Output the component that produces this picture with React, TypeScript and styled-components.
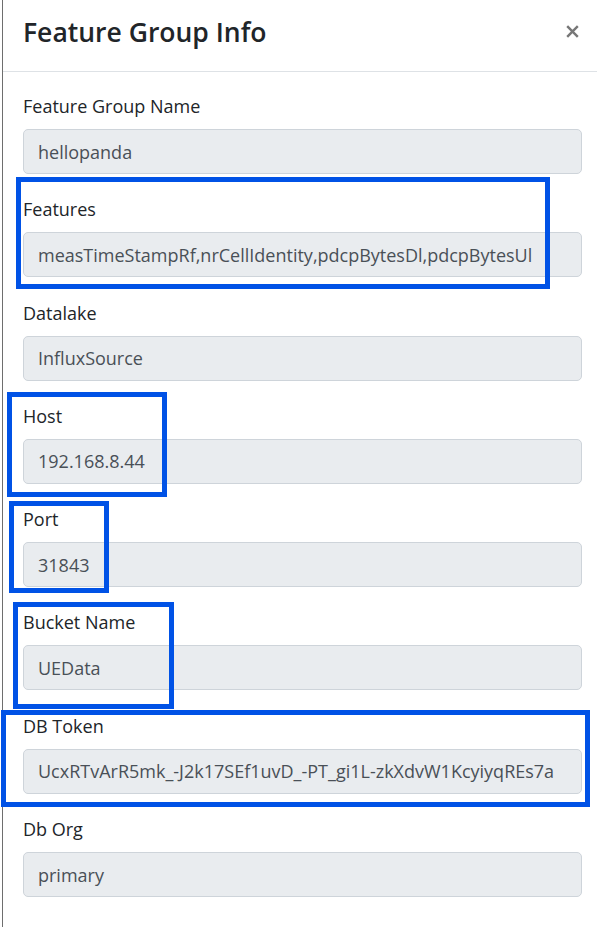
import React from "react";
import styled, { createGlobalStyle } from "styled-components";

const GlobalStyle = createGlobalStyle`
  html, body {
    margin: 0;
    padding: 0;
    background: #ffffff;
    overflow: hidden;
  }
  body {
    font-family: "Open Sans", "Noto Sans", "Liberation Sans", sans-serif;
    color: #212529;
  }
  * { box-sizing: border-box; }
`;

const Page = styled.div`
  position: relative;
  width: 597px;
  height: 927px;
  padding-left: 2px;
  overflow: hidden;
`;

const Modal = styled.div`
  height: 100%;
  border-left: 1px solid #6e6e6e;
  background: #ffffff;
`;

const Header = styled.header`
  display: flex;
  align-items: center;
  justify-content: space-between;
  height: 72px;
  padding: 0 18px 6px 20px;
  border-bottom: 1px solid #dee2e6;
`;

const Title = styled.h4`
  margin: 0;
  font-size: 26.5px;
  font-weight: 600;
  line-height: 1.5;
  color: #212529;
`;

const CloseButton = styled.button`
  display: flex;
  align-items: center;
  justify-content: center;
  padding: 0;
  margin: 0 0 2px 0;
  border: 0;
  background: transparent;
  color: #777777;
  cursor: pointer;
`;

const Body = styled.div`
  padding: 18px 15px 0 20px;
`;

const Group = styled.div`
  margin-bottom: 19.3px;
`;

const Label = styled.label`
  display: block;
  font-size: 18px;
  line-height: 29px;
  padding-top: 2px;
  margin-bottom: 8px;
  color: #212529;
`;

const Field = styled.input`
  display: block;
  width: 100%;
  height: 45px;
  padding: 0 14px;
  font-family: inherit;
  font-size: 18px;
  color: #495057;
  background: #e9ecef;
  border: 1px solid #ced4da;
  border-radius: 5px;
  outline: none;
`;

const Highlight = styled.div<{ $x: number; $y: number; $w: number; $h: number }>`
  position: absolute;
  left: ${(p) => p.$x}px;
  top: ${(p) => p.$y}px;
  width: ${(p) => p.$w}px;
  height: ${(p) => p.$h}px;
  border: 5px solid #0052e6;
  pointer-events: none;
`;

const fields: [string, string][] = [
  ["Feature Group Name", "hellopanda"],
  ["Features", "measTimeStampRf,nrCellIdentity,pdcpBytesDl,pdcpBytesUl"],
  ["Datalake", "InfluxSource"],
  ["Host", "192.168.8.44"],
  ["Port", "31843"],
  ["Bucket Name", "UEData"],
  ["DB Token", "UcxRTvArR5mk_-J2k17SEf1uvD_-PT_gi1L-zkXdvW1KcyiyqREs7a"],
  ["Db Org", "primary"],
];

const highlights = [
  { x: 16, y: 177, w: 534, h: 112 },
  { x: 7, y: 392, w: 160, h: 105 },
  { x: 9, y: 501, w: 100, h: 92 },
  { x: 13, y: 602, w: 161, h: 107 },
  { x: 1, y: 710, w: 589, h: 97 },
];

export default function App() {
  return (
    <>
      <GlobalStyle />
      <Page>
        <Modal>
          <Header>
            <Title>Feature Group Info</Title>
            <CloseButton aria-label="Close">
              <svg width="13" height="13" viewBox="0 0 13 13">
                <path d="M1.2 1.2 L11.8 11.8 M11.8 1.2 L1.2 11.8" stroke="currentColor" strokeWidth="2.4" strokeLinecap="butt" />
              </svg>
            </CloseButton>
          </Header>
          <Body>
            {fields.map(([label, value]) => (
              <Group key={label}>
                <Label>{label}</Label>
                <Field readOnly value={value} />
              </Group>
            ))}
          </Body>
        </Modal>
        {highlights.map((h, i) => (
          <Highlight key={i} $x={h.x} $y={h.y} $w={h.w} $h={h.h} />
        ))}
      </Page>
    </>
  );
}
